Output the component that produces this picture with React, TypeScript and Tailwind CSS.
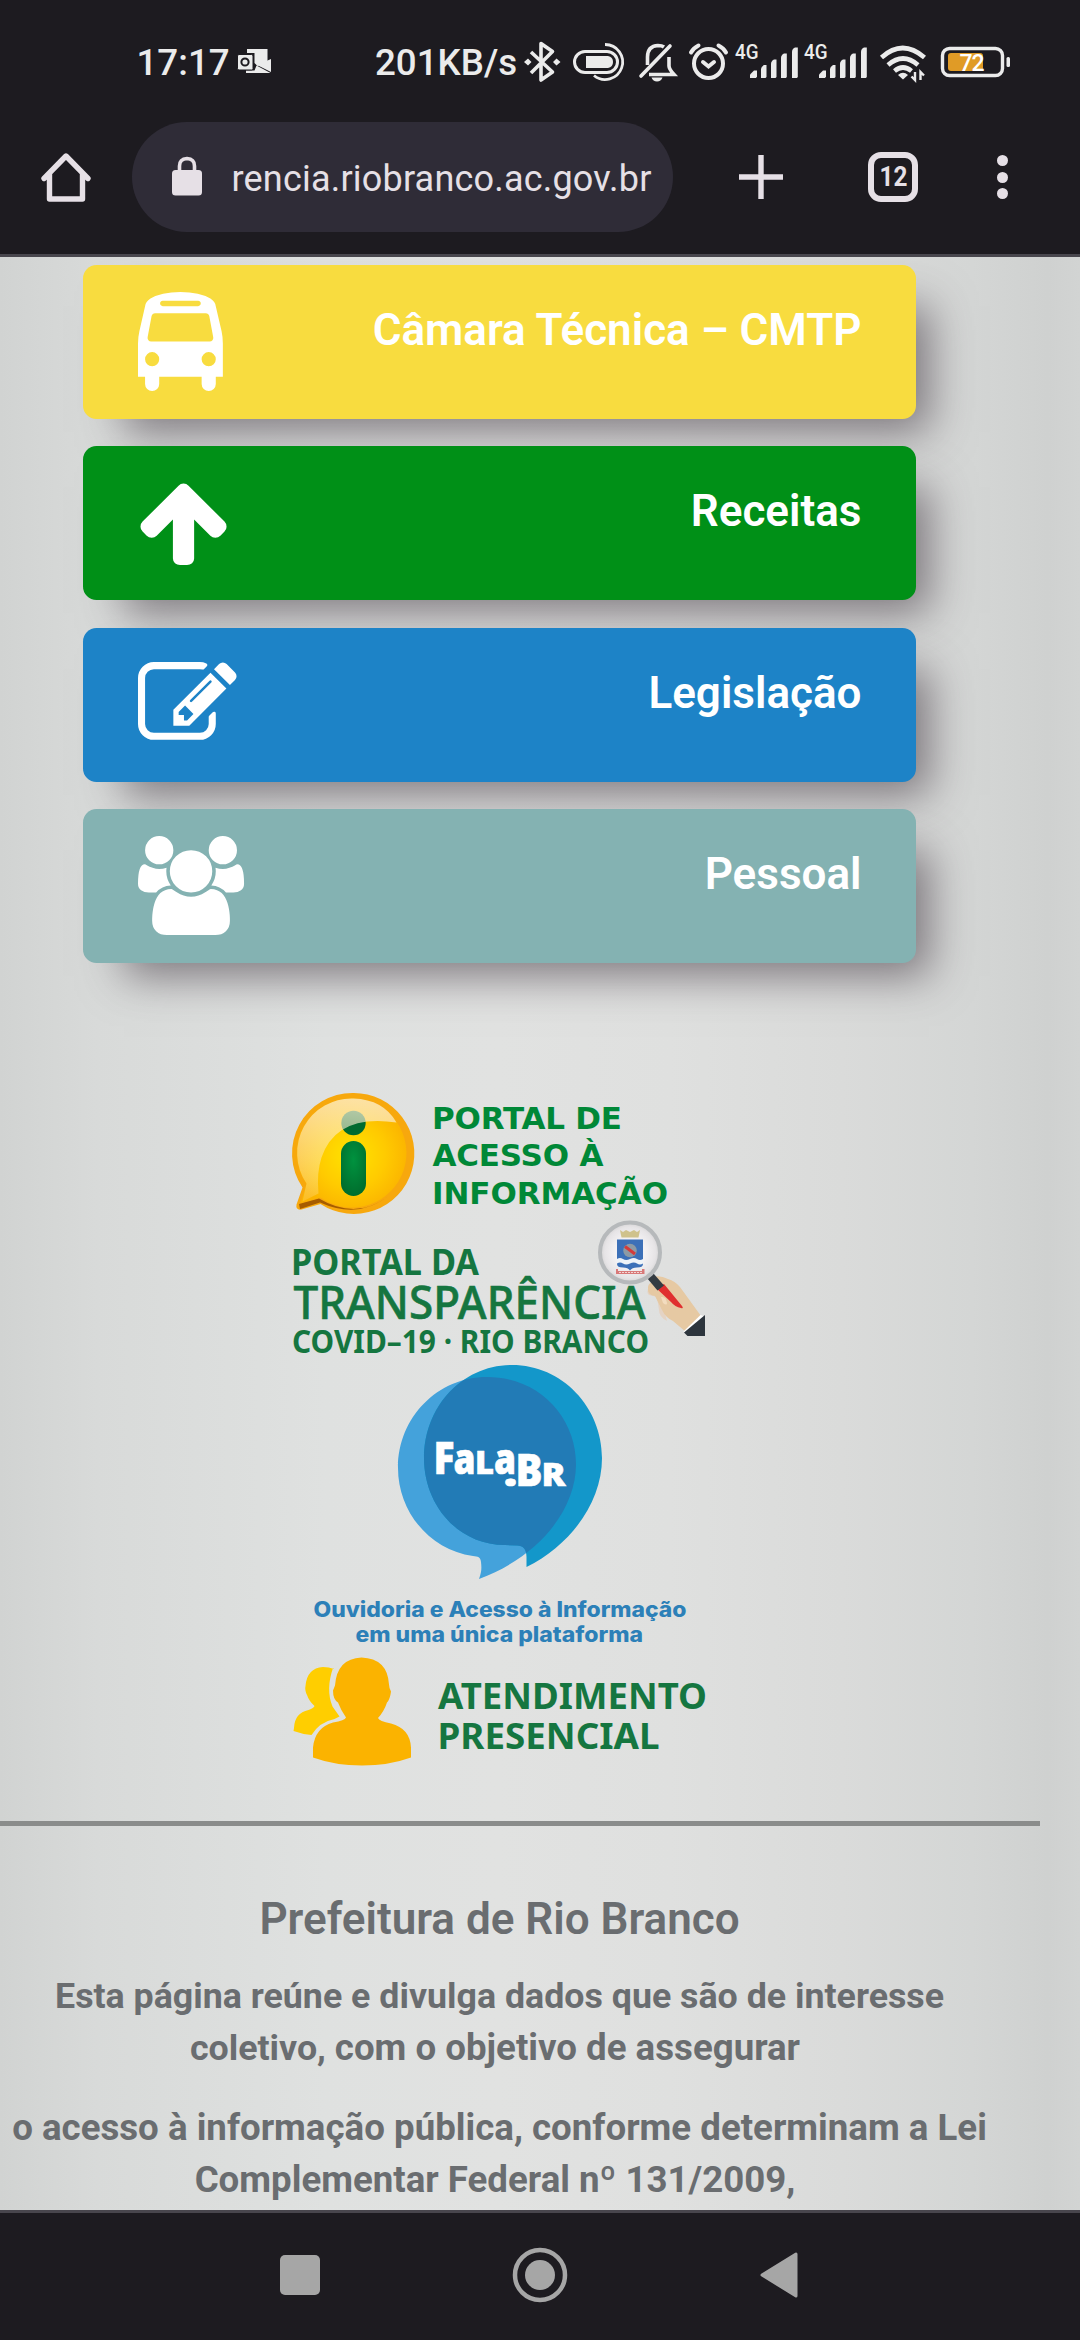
import React from "react";

type BoxProps = {
  box: [number, number, number, number];
  className?: string;
  children: React.ReactNode;
};

function Art({ box, className, children }: BoxProps) {
  return (
    <svg
      className={`block shrink-0 overflow-visible ${className ?? ""}`}
      width={box[2]}
      height={box[3]}
      viewBox={box.join(" ")}
      fill="none"
    >
      {children}
    </svg>
  );
}

const LIGHT = "#ebebeb";
const SOFT = "#e6e0e6";

function Signal({ x }: { x: number }) {
  return (
    <g fill={LIGHT}>
      <text x={x} y="59" fontFamily="Roboto" fontSize="20" textLength="23.5" lengthAdjust="spacingAndGlyphs">
        4G
      </text>
      <path d={`M${x + 15} 78v-3.500l4-4h3v6l-1 1.500z`} />
      <path d={`M${x + 26} 78V69q0-2 3-4h2.500v12l-1 1z`} />
      <path d={`M${x + 36} 78V64q0-3 3-4.500h2.500v17.500l-1 1z`} />
      <path d={`M${x + 46} 78V58q0-3 3-4.500h2.800v23.500l-1 1z`} />
      <path d={`M${x + 57} 78V52q0-3.500 3-4.500h2.800v29.500l-1 1z`} />
    </g>
  );
}

function StatusBar() {
  return (
    <div className="flex h-[122px] items-center pl-[136.500px] text-[36.7px] font-medium leading-none text-[#ebebeb]">
      <span className="mt-[5px] w-[98px] whitespace-nowrap">17:17</span>
      <Art box={[236, 31, 40, 60]}>
        <path d="M248 49h20.500v13l-10 4-3-3V53h-7.500z" fill={LIGHT} />
        <path d="M258 65l14-6v13z" fill={LIGHT} />
        <path d="M247 73h24.500l-14-7.500-2 5h-8.500z" fill={LIGHT} />
        <rect x="238.500" y="54.500" width="15.500" height="15.500" rx="1.500" fill={LIGHT} stroke="#1d1b20" strokeWidth="1" />
        <circle cx="246" cy="62" r="3.600" stroke="#1d1b20" strokeWidth="2" />
      </Art>
      <span className="ml-[100.500px] mt-[5px] w-[144px] whitespace-nowrap">201KB/s</span>
      <Art box={[519, 31, 46, 60]}>
        <path d="M531 52l21.500 20-11.500 8V43.500l11.500 8L531 73" stroke={LIGHT} strokeWidth="3.600" strokeLinejoin="round" />
        <path d="M524 62l4-3.500 3.500 3.500-3.500 3.500zM553 62l3.500-3.500 4 3.500-4 3.500z" fill={LIGHT} />
      </Art>
      <Art box={[565, 31, 70, 60]}>
        <rect x="574.500" y="51.500" width="43" height="21" rx="10.500" stroke={LIGHT} strokeWidth="3" />
        <path d="M586 56h22q5 1 5 6t-5 6h-22z" fill={LIGHT} />
        <path d="M605 44.500a17.500 17.500 0 1 1-11 31" stroke={LIGHT} strokeWidth="2.800" />
      </Art>
      <Art box={[635, 31, 45, 60]}>
        <path d="M670 46L641 76" stroke={LIGHT} strokeWidth="3.600" strokeLinecap="round" />
        <path d="M647.500 65V57q0-11 10.500-11.500 4 0 6 1.500M669 57v9q0 3 5 8.500h-25" stroke={LIGHT} strokeWidth="3.600" />
        <path d="M651.500 77.500h11q-1.500 4-5.500 4t-5.500-4z" fill={LIGHT} />
      </Art>
      <Art box={[680, 31, 52, 60]}>
        <circle cx="708.500" cy="63.500" r="14.500" stroke={LIGHT} strokeWidth="4" />
        <path d="M703 62l5.500 4.500 5.500-4.500M691 52.500q2-4 7.500-7M726 52.500q-2-4-7.500-7" stroke={LIGHT} strokeWidth="4" strokeLinecap="round" />
      </Art>
      <Art box={[732, 31, 140, 60]}>
        <Signal x={735} />
        <Signal x={804} />
      </Art>
      <Art box={[872, 31, 62, 60]}>
        <path d="M881.500 57.500q21-19 43 0M888 65q15-13 30 0M894.500 71q8.500-7 17 0" stroke={LIGHT} strokeWidth="4.600" />
        <path d="M898 75q5-4.500 10 0l-5 4.500z" fill={LIGHT} />
        <path d="M915 72v8l-3.500-3.500M920.500 80v-8l3.500 3.500" stroke={LIGHT} strokeWidth="2.400" />
      </Art>
      <Art box={[934, 31, 80, 60]}>
        <rect x="942.500" y="48.500" width="60" height="27" rx="7" stroke={LIGHT} strokeWidth="3.400" />
        <rect x="1006.500" y="57" width="3.500" height="10" rx="1.500" fill={LIGHT} />
        <rect x="948" y="53" width="35" height="18" rx="3" fill="#e09b26" />
        <text x="959.500" y="70.500" fill="#fff" fontFamily="Roboto" fontWeight="500" fontSize="23" textLength="25">
          72
        </text>
      </Art>
    </div>
  );
}

function Toolbar() {
  return (
    <div className="flex h-[110px] items-center pl-[36px]">
      <Art box={[36, 147, 96, 60]}>
        <path d="M44 178.500L66 156l22 22.500M49.500 174v25h33v-25" stroke={SOFT} strokeWidth="5.400" strokeLinecap="round" strokeLinejoin="round" />
      </Art>
      <div className="flex h-[110px] w-[541px] shrink-0 items-center rounded-full bg-[#2f2c37]">
        <Art box={[167, 147, 40, 60]} className="ml-[35px]">
          <rect x="172" y="170" width="30" height="25.500" rx="3.500" fill={SOFT} />
          <path d="M179.500 171v-5q0-7 7.500-7.500 7.500 .5 7.500 7.500v5" stroke={SOFT} strokeWidth="3.600" />
        </Art>
        <span className="ml-[24.500px] mt-[4px] whitespace-nowrap text-[36px] leading-none tracking-[0.2px] text-[#e6e0e6]">
          rencia.riobranco.ac.gov.br
        </span>
      </div>
      <Art box={[733, 147, 56, 60]} className="ml-[60px]">
        <path d="M761 155v44M739 177h44" stroke={SOFT} strokeWidth="5.400" />
      </Art>
      <div className="ml-[79px] flex h-[50px] w-[50px] shrink-0 items-center justify-center rounded-[13px] border-[6px] border-[#e6e0e6] text-[27px] font-bold leading-none text-[#e6e0e6]">
        <span className="scale-x-90">12</span>
      </div>
      <div className="ml-[79px] flex flex-col gap-[5.500px]">
        <i className="size-[11px] rounded-full bg-[#e6e0e6]" />
        <i className="size-[11px] rounded-full bg-[#e6e0e6]" />
        <i className="size-[11px] rounded-full bg-[#e6e0e6]" />
      </div>
    </div>
  );
}

const BUS =
  "M512 1216q0-53-37.500-90.500t-90.500-37.500-90.500 37.500-37.500 90.500 37.500 90.500 90.500 37.500 90.500-37.500 37.500-90.500zm1024 0q0-53-37.500-90.500t-90.500-37.500-90.500 37.500-37.500 90.500 37.500 90.500 90.500 37.500 90.500-37.500 37.500-90.500zm-46-396l-72-384q-5-23-22.500-37.500t-40.500-14.500h-918q-23 0-40.500 14.500t-22.500 37.500l-72 384q-5 30 14 53t49 23h1062q30 0 49-23t14-53zm-226-612q0-20-14-34t-34-14h-640q-20 0-34 14t-14 34 14 34 34 14h640q20 0 34-14t14-34zm400 725v603h-128v128q0 53-37.500 90.500t-90.500 37.500-90.500-37.500-37.500-90.500v-128h-768v128q0 53-37.500 90.500t-90.500 37.500-90.500-37.500-37.500-90.500v-128h-128v-603q0-112 25-223l103-454q9-78 97.500-137t230-89 312.500-30 312.500 30 230 89 97.500 137l105 454q23 102 23 223z";
const ARROW =
  "M1675 971q0 51-37 90l-75 75q-38 38-91 38-54 0-90-38l-294-293v704q0 52-37.500 84.500t-90.500 32.500h-128q-53 0-90.500-32.500t-37.500-84.500v-704l-294 293q-36 38-90 38t-90-38l-75-75q-38-38-38-90 0-53 38-91l651-651q35-37 90-37 54 0 91 37l651 651q37 39 37 91z";
const EDIT =
  "M888 1184l116-116-152-152-116 116v56h96v96h56zm440-720q-16-16-33 1l-350 350q-17 17-1 33t33-1l350-350q17-17 1-33zm80 594v190q0 119-84.500 203.500t-203.500 84.500h-832q-119 0-203.500-84.500t-84.500-203.500v-832q0-119 84.500-203.500t203.500-84.500h832q63 0 117 25 15 7 18 23 3 17-9 29l-49 49q-14 14-32 8-23-6-45-6h-832q-66 0-113 47t-47 113v832q0 66 47 113t113 47h832q66 0 113-47t47-113v-126q0-13 9-22l64-64q15-15 35-7t20 29zm-96-738l288 288-672 672h-288v-288zm444 132l-92 92-288-288 92-92q28-28 68-28t68 28l152 152q28 28 28 68t-28 68z";
const USERS =
  "M657 896q-162 5-265 128h-134q-82 0-138-40.500t-56-118.500q0-353 124-353 6 0 43.500 21t97.500 42.500 119 21.500q67 0 133-23-5 37-5 66 0 139 81 256zm1071 637q0 120-73 189.500t-194 69.500h-874q-121 0-194-69.500t-73-189.500q0-53 3.500-103.500t14-109 26.500-108.500 43-97.500 62-81 85.500-53.500 111.500-20q10 0 43 21.500t73 48 107 48 135 21.500 135-21.500 107-48 73-48 43-21.500q61 0 111.500 20t85.500 53.500 62 81 43 97.500 26.500 108.500 14 109 3.500 103.500zm-1024-1277q0 106-75 181t-181 75-181-75-75-181 75-181 181-75 181 75 75 181zm704 384q0 159-112.500 271.500t-271.500 112.500-271.500-112.500-112.500-271.500 112.500-271.500 271.500-112.500 271.500 112.500 112.500 271.500zm576 225q0 78-56 118.500t-138 40.500h-134q-103-123-265-128 81-117 81-256 0-29-5-66 66 23 133 23 59 0 119-21.500t97.500-42.500 43.500-21q124 0 124 353zm-128-609q0 106-75 181t-181 75-181-75-75-181 75-181 181-75 181 75 75 181z";

const cards = [
  { label: "Câmara Técnica – CMTP", path: BUS, left: 128, color: "bg-[#f8dc3f]", gap: "" },
  { label: "Receitas", path: ARROW, left: 72, color: "bg-[#009017]", gap: "mt-[27px]" },
  { label: "Legislação", path: EDIT, left: 0, color: "bg-[#1d83c7]", gap: "mt-[28px]" },
  { label: "Pessoal", path: USERS, left: 64, color: "bg-[#84b2b2]", gap: "mt-[27px]" },
];

function Cards() {
  return (
    <nav className="ml-[83px] mt-[8px] w-[833px]">
      {cards.map((c) => (
        <a
          key={c.label}
          className={`${c.color} ${c.gap} flex h-[154px] items-start justify-between rounded-[13.500px] pl-[55px] pr-[54.500px] shadow-[27px_27px_41px_-14px_rgba(66,56,66,0.62)]`}
        >
          <svg className="mt-[27px] block" width="108" height="99" viewBox={`${c.left} 0 1955 1792`} fill="#fff">
            <path d={c.path} />
          </svg>
          <span className="mt-[32px] text-[44px] font-semibold leading-[66px] text-white">{c.label}</span>
        </a>
      ))}
    </nav>
  );
}

function InfoLogo() {
  const tone = { fill: "#008837", fontFamily: "DejaVu Sans", fontWeight: 700, fontSize: 31 };
  return (
    <Art box={[292, 1088, 414, 130]}>
      <defs>
        <radialGradient id="bubble" cx="0.5" cy="0.52" r="0.52">
          <stop offset="0.1" stopColor="#ffe000" />
          <stop offset="0.6" stopColor="#ffca00" />
          <stop offset="1" stopColor="#fbb400" />
        </radialGradient>
        <linearGradient id="gloss" x1="0.4" y1="0" x2="0.3" y2="1">
          <stop offset="0" stopColor="#fdf0d8" stopOpacity="0.75" />
          <stop offset="0.5" stopColor="#fdeccc" stopOpacity="0.5" />
          <stop offset="1" stopColor="#fff" stopOpacity="0.15" />
        </linearGradient>
        <radialGradient id="stem" cx="0.5" cy="0.35" r="0.7">
          <stop offset="0" stopColor="#00923f" />
          <stop offset="1" stopColor="#006b2c" />
        </radialGradient>
      </defs>
      <path d="M353.500 1093a60.500 60.500 0 1 1-33 111l-19 5.500q-6 1-5-5l6-17a60.500 60.500 0 0 1 51-94.500z" fill="#f7a80d" />
      <path d="M320 1202.500L300 1209l-1-5 20-5.500q37 22 69-2-30 23-68 6z" fill="#a65c00" />
      <path d="M353.500 1098.500a54.500 54.500 0 1 1-33 99l-20 5.500 6-19a54.500 54.500 0 0 1 47-85.500z" fill="url(#bubble)" />
      <circle cx="353.500" cy="1123" r="12.200" fill="#006b30" />
      <path d="M353.500 1098.500q30 1 43 24-60-9-75 35-5 15-3 36l-16 8 4-18a54.500 54.500 0 0 1 47-85z" fill="url(#gloss)" />
      <rect x="341" y="1141" width="25" height="55" rx="12.500" fill="url(#stem)" />
      <text {...tone} x="432" y="1129" textLength="190">PORTAL DE</text>
      <text {...tone} x="432.500" y="1166" textLength="171">ACESSO À</text>
      <text {...tone} x="432" y="1204" textLength="236">INFORMAÇÃO</text>
    </Art>
  );
}

function CovidLogo() {
  const tone = { fill: "#157640", fontFamily: "Noto Sans", lengthAdjust: "spacingAndGlyphs" as const };
  return (
    <Art box={[292, 1218, 418, 142]}>
      <defs>
        <radialGradient id="lens">
          <stop offset="0.5" stopColor="#f4f2f4" />
          <stop offset="0.85" stopColor="#e6e4e6" />
          <stop offset="1" stopColor="#d4d3d4" />
        </radialGradient>
      </defs>
      <text {...tone} fontWeight="700" x="291" y="1275" fontSize="35" textLength="188">PORTAL DA</text>
      <text {...tone} fontWeight="500" stroke="#157640" strokeWidth="0.6" x="293.500" y="1319" fontSize="45" textLength="352">
        TRANSPARÊNCIA
      </text>
      <text {...tone} fontWeight="700" x="292" y="1353" fontSize="32" textLength="357">COVID–19 · RIO BRANCO</text>
      <path d="M657 1283l-8 3q-3 7 0 9l8 2 2 13q0 7 8 11z" fill="#e4d3c4" />
      <path d="M653 1281q-6 3-5 9 0 5 7 6l7 14q4 8 11 11l13 11 15-16-21-29q-5-6-12-8-8-4-15-2z" fill="#e6c9a3" />
      <path d="M683.500 1331.500l17-16.500 3 1-17.500 18z" fill="#fff" />
      <path d="M705 1315v21h-17.500l-3.500-3.500z" fill="#2d353d" />
      <path d="M656 1288l8-4 18 22q2 3-1 2-6-1-10-6z" fill="#e02f2f" />
      <path d="M647 1278l6.500-4.500 10.500 12-6.500 5z" fill="#333b42" />
      <path d="M661 1297q5-1 6 6 0 3-4 0z" fill="#f3dcbf" />
      <circle cx="630" cy="1252.500" r="30" fill="url(#lens)" stroke="#b6b9bb" strokeWidth="4" />
      <path d="M620 1230l3 2 3-2 4 2 4-2 3 2 3-2-1.500 7.500h-17z" fill="#cfc28c" />
      <path d="M617 1239.500h26V1264q0 3.500-6 3.500-5 0-7 3-2-3-7-3-6 0-6-3.500z" fill="#3c70b8" />
      <path d="M617 1259q3-2 6 0t7 0 7 0 6 0v4.500q-3 2-6 0t-7 0-7 0-6 0z" fill="#eef3f8" />
      <circle cx="630" cy="1250.500" r="6.800" fill="#8c9aa5" />
      <path d="M625 1246.500l10 7.500" stroke="#d33b3b" strokeWidth="3.200" />
      <path d="M616 1269h2v2h24v-2h2.500v5h-28.500z" fill="#d87a7a" />
      <path d="M619 1272.500h23" stroke="#f3d5d5" strokeWidth="1" strokeDasharray="2 1" />
    </Art>
  );
}

function FalaLogo() {
  const left =
    "M487 1377C540 1377 576 1418 576 1464C576 1512 536 1558 479 1579C482 1571 481.500 1567 481 1562C480.500 1557 478 1556.500 473 1556C430 1550 398 1512 398 1468C398 1417 438 1377 487 1377Z";
  const right =
    "M512 1365C562 1365 602 1407 602 1458C602 1502 571 1545 526.500 1567V1557C526.500 1549 523 1545.500 517 1545.500L505 1545C458 1545 424 1505 424 1458C424 1407 462 1365 512 1365Z";
  const white = {
    fill: "#fff",
    stroke: "#fff",
    strokeWidth: 0.6,
    fontFamily: "Open Sans",
    fontWeight: 800,
    lengthAdjust: "spacingAndGlyphs" as const,
  };
  const caption = {
    fill: "#2c80b8",
    fontFamily: "Inter",
    fontWeight: 800,
    fontSize: 21,
    lengthAdjust: "spacingAndGlyphs" as const,
  };
  return (
    <Art box={[292, 1360, 414, 292]}>
      <defs>
        <clipPath id="leftBubble">
          <path d={left} />
        </clipPath>
      </defs>
      <path d={left} fill="#44a2db" />
      <path d={right} fill="#1397ca" />
      <path d={right} fill="#227bb6" clipPath="url(#leftBubble)" />
      <text {...white} x="433.500" y="1473.500" fontSize="44" textLength="21">F</text>
      <text {...white} x="453.500" y="1473.500" fontSize="43" textLength="22">a</text>
      <text {...white} x="475" y="1473.500" fontSize="31" textLength="19">L</text>
      <text {...white} x="494" y="1473.500" fontSize="43" textLength="22">a</text>
      <text {...white} x="503.500" y="1485.500" fontSize="38" textLength="14">.</text>
      <text {...white} x="515.500" y="1485.500" fontSize="44" textLength="27">B</text>
      <text {...white} x="541.500" y="1485.500" fontSize="32" textLength="24">R</text>
      <text {...caption} x="313.500" y="1617" textLength="373">Ouvidoria e Acesso à Informação</text>
      <text {...caption} x="355.500" y="1642" textLength="287.500">em uma única plataforma</text>
    </Art>
  );
}

function AttendanceLogo() {
  const tone = {
    fill: "#157640",
    fontFamily: "Noto Sans",
    fontWeight: 700,
    fontSize: 36.5,
    lengthAdjust: "spacingAndGlyphs" as const,
  };
  return (
    <Art box={[292, 1652, 416, 118]}>
      <path
        d="M334 1669q-5-2-11-2-16 1-17.500 19-1 4 1.500 9 2 6 7.500 11-.5 2-6 4-14 3-14.500 18l-.5 3q8 3 18 4 8-13 23-16l5-2.500-7-10q-7-17 .5-38.500z"
        fill="#ffce00"
      />
      <path
        d="M361.500 1657.500q26 1 27.500 27 0 3 2 7-1 8-4 11-3 9-9 15.500 1 3 13 5.500 19 5 20 24v10q-22 8-49 8t-49-8v-10q2-20 20-25 12-2 13-5-5-7-8-15-5-3-5-12l2-5q2-27 26.500-28z"
        fill="#fbb300"
      />
      <text {...tone} x="438" y="1708.500" textLength="269">ATENDIMENTO</text>
      <text {...tone} x="437.500" y="1748.500" textLength="222">PRESENCIAL</text>
    </Art>
  );
}

export default function App() {
  return (
    <div className="flex h-[2340px] w-[1080px] flex-col overflow-hidden bg-[#1d1b20] font-['Roboto',sans-serif]">
      <header className="h-[257px] shrink-0 border-b-[3px] border-[#48464d] bg-[#1d1b20]">
        <StatusBar />
        <Toolbar />
      </header>

      <main className="h-[1953px] shrink-0 overflow-hidden bg-[linear-gradient(90deg,#d1d3d2_0%,#d8dad9_9%,#dfe1e0_30%,#e1e2e1_46%,#dfe0df_62%,#dadbda_78%,#d4d6d5_90%,#cfd1d0_97%,#d2d4d3_100%)]">
        <Cards />

        <section className="ml-[292px] mt-[125px] flex w-[418px] flex-col">
          <InfoLogo />
          <CovidLogo />
          <FalaLogo />
          <AttendanceLogo />
        </section>

        <div className="mt-[51px] h-[5px] w-[1040px] bg-[#8a8c8b]" />

        <footer className="w-[999px] whitespace-nowrap pt-[67px] text-center text-[#6a6d70]">
          <h2 className="text-[44px] font-semibold leading-[53px]">Prefeitura de Rio Branco</h2>
          <p className="mt-[24px] text-[35.750px] font-bold leading-[52px]">
            Esta página reúne e divulga dados que são de interesse
            <br />
            <span className="pr-[9px]">
              coletivo, <span className="text-[36.670px]">com o objetivo de assegurar</span>
            </span>
          </p>
          <p className="mt-[28px] text-[36.670px] font-bold leading-[52px]">
            o acesso à informação pública, conforme determinam a Lei
            <br />
            <span className="pr-[9px]">Complementar Federal nº 131/2009,</span>
          </p>
        </footer>
      </main>

      <div className="flex h-[130px] shrink-0 items-start border-t-[3px] border-[#48464d] bg-[#1d1b20] pl-[270px] pt-[31px]">
        <Art box={[270, 2244, 60, 60]}>
          <rect x="280" y="2255" width="40" height="40" rx="5" fill="#a6a6a6" />
        </Art>
        <Art box={[510, 2244, 60, 60]} className="ml-[180px]">
          <circle cx="540" cy="2275" r="25" stroke="#a6a6a6" strokeWidth="4.500" />
          <circle cx="540" cy="2275" r="15" fill="#a6a6a6" />
        </Art>
        <Art box={[750, 2244, 60, 60]} className="ml-[180px]">
          <path d="M762 2275l34-21v42z" fill="#a6a6a6" stroke="#a6a6a6" strokeWidth="3" strokeLinejoin="round" />
        </Art>
      </div>
    </div>
  );
}
